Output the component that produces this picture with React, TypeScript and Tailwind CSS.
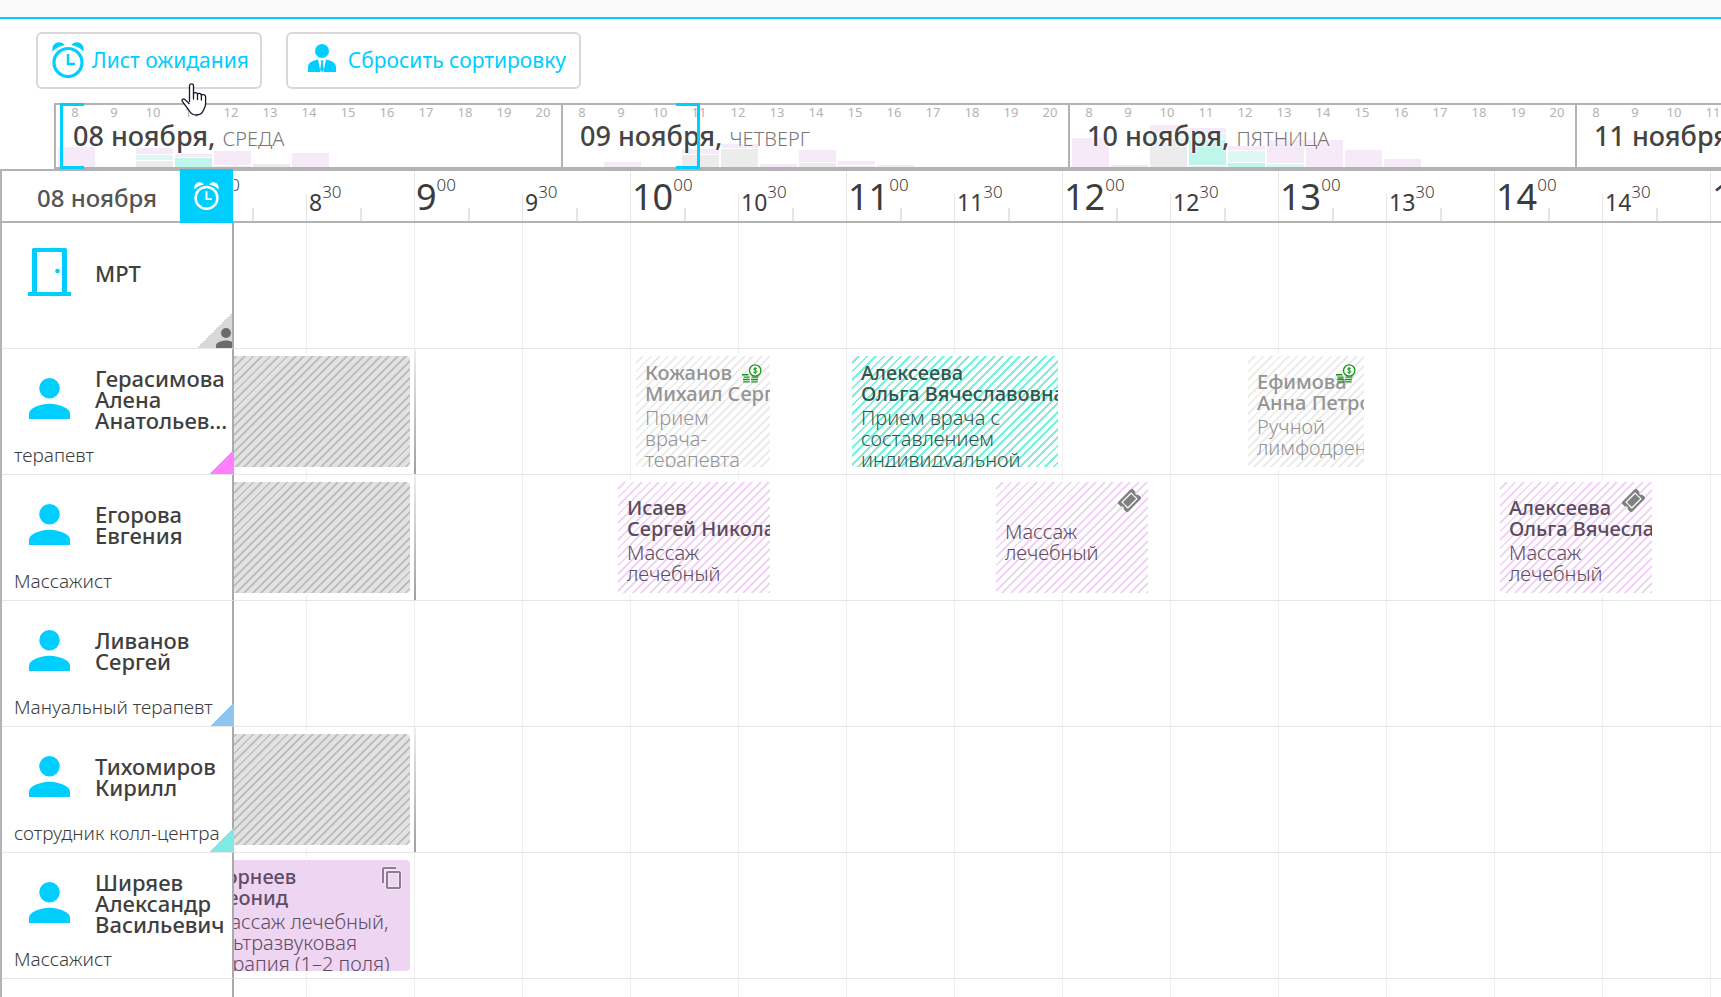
import React from 'react';
import { FaTicketAlt } from 'react-icons/fa';
import { MdContentCopy } from 'react-icons/md';

type Tone = 'pink' | 'grey' | 'mint' | 'teal';
type Segment = [Tone, number];

const toneClass: Record<Tone, string> = {
  pink: 'bg-[#f6eaf8]',
  grey: 'bg-[#ececec]',
  mint: 'bg-[#dcf7f4]',
  teal: 'bg-[#c0f5eb]',
};

interface Day {
  date: string;
  weekday: string;
  load: Record<number, Segment[]>;
}

const days: Day[] = [
  {
    date: '08 ноября,',
    weekday: 'СРЕДА',
    load: {
      8: [['pink', 20]],
      10: [['grey', 6], ['mint', 5], ['pink', 6]],
      11: [['teal', 9], ['pink', 3]],
      12: [['grey', 1], ['pink', 14]],
      13: [['grey', 3]],
      14: [['pink', 14]],
    },
  },
  {
    date: '09 ноября,',
    weekday: 'ЧЕТВЕРГ',
    load: {
      9: [['pink', 5]],
      11: [['grey', 12], ['pink', 5]],
      12: [['grey', 18], ['pink', 4]],
      13: [['pink', 3]],
      14: [['grey', 4], ['pink', 12]],
      15: [['grey', 1], ['pink', 4]],
      16: [['pink', 2]],
    },
  },
  {
    date: '10 ноября,',
    weekday: 'ПЯТНИЦА',
    load: {
      8: [['pink', 29]],
      9: [['grey', 2]],
      10: [['grey', 29], ['mint', 2], ['pink', 9]],
      11: [['grey', 1], ['teal', 25], ['mint', 5], ['pink', 5]],
      12: [['teal', 4], ['mint', 11], ['pink', 4]],
      13: [['mint', 3], ['pink', 23]],
      14: [['pink', 27]],
      15: [['pink', 17]],
      16: [['pink', 8]],
    },
  },
  { date: '11 ноября,', weekday: 'СУББОТА', load: {} },
];

const dayHours = [8, 9, 10, 11, 12, 13, 14, 15, 16, 17, 18, 19, 20];
const rulerHours = [8, 9, 10, 11, 12, 13, 14, 15];

type Look = 'busy' | 'done' | 'teal' | 'pink' | 'solid';

interface Visit {
  from: number;
  to: number;
  look: Look;
  client?: [string, string];
  service?: string;
  badge?: 'coins' | 'ticket' | 'copy';
}

interface Resource {
  name: string;
  role: string;
  kind: 'room' | 'person';
  corner?: string;
  shift?: boolean;
  visits: Visit[];
}

const at = (h: number, m = 0) => (h - 8) * 60 + m;

const resources: Resource[] = [
  { name: 'МРТ', role: '', kind: 'room', visits: [] },
  {
    name: 'Герасимова Алена Анатольев...',
    role: 'терапевт',
    kind: 'person',
    corner: 'bg-[linear-gradient(135deg,transparent_50%,#ff80ff_50%)]',
    shift: true,
    visits: [
      { from: at(8), to: at(9), look: 'busy' },
      { from: at(10), to: at(10, 40), look: 'done', client: ['Кожанов', 'Михаил Сергеевич'], service: 'Прием врача-терапевта', badge: 'coins' },
      { from: at(11), to: at(12), look: 'teal', client: ['Алексеева', 'Ольга Вячеславовна'], service: 'Прием врача с составлением индивидуальной' },
      { from: at(12, 50), to: at(13, 25), look: 'done', client: ['Ефимова', 'Анна Петровна'], service: 'Ручной лимфодренаж', badge: 'coins' },
    ],
  },
  {
    name: 'Егорова Евгения',
    role: 'Массажист',
    kind: 'person',
    shift: true,
    visits: [
      { from: at(8), to: at(9), look: 'busy' },
      { from: at(9, 55), to: at(10, 40), look: 'pink', client: ['Исаев', 'Сергей Николаевич'], service: 'Массаж лечебный' },
      { from: at(11, 40), to: at(12, 25), look: 'pink', service: 'Массаж лечебный', badge: 'ticket' },
      { from: at(14), to: at(14, 45), look: 'pink', client: ['Алексеева', 'Ольга Вячеславовна'], service: 'Массаж лечебный', badge: 'ticket' },
    ],
  },
  {
    name: 'Ливанов Сергей',
    role: 'Мануальный терапевт',
    kind: 'person',
    corner: 'bg-[linear-gradient(135deg,transparent_50%,#8ec5ef_50%)]',
    visits: [],
  },
  {
    name: 'Тихомиров Кирилл',
    role: 'сотрудник колл-центра',
    kind: 'person',
    corner: 'bg-[linear-gradient(135deg,transparent_50%,#80e9e6_50%)]',
    shift: true,
    visits: [{ from: at(8), to: at(9), look: 'busy' }],
  },
  {
    name: 'Ширяев Александр Васильевич',
    role: 'Массажист',
    kind: 'person',
    visits: [
      { from: at(8), to: at(9), look: 'solid', client: ['Корнеев', 'Леонид'], service: 'Массаж лечебный, ультразвуковая терапия (1–2 поля)', badge: 'copy' },
    ],
  },
];

const lookClass: Record<Look, string> = {
  busy: 'rounded bg-[repeating-linear-gradient(135deg,#e2e2e2_0_4px,#c0c0c0_4px_6px)]',
  done: 'text-[#949494] bg-[repeating-linear-gradient(135deg,#ffffff_0_4px,#ececec_4px_6px)]',
  teal: 'text-[#36544d] bg-[repeating-linear-gradient(135deg,#ffffff_0_4px,#7df0dc_4px_6px)]',
  pink: 'text-[#5c4a5e] bg-[repeating-linear-gradient(135deg,#ffffff_0_4px,#f0d6f4_4px_6px)]',
  solid: 'rounded text-[#604c65] bg-[#eed5f1]',
};

function AlarmIcon({ className }: { className: string }) {
  return (
    <svg viewBox="0 0 32 36" className={className} fill="none" aria-hidden="true">
      <circle cx="16" cy="20.5" r="14" stroke="currentColor" strokeWidth="3.2" />
      <path d="M16 12v10h7" stroke="currentColor" strokeWidth="2.4" />
      <path d="M.6 9.5C-.8 4 3-.2 7.5.2c2.300.1 4.300 1.400 5.200 3C7.500 4 3.500 6.200.6 9.500Z" fill="currentColor" />
      <path d="M31.400 9.500C32.800 4 29-.2 24.500.2c-2.300.1-4.300 1.400-5.200 3 5.200.8 9.200 3 12.100 6.300Z" fill="currentColor" />
    </svg>
  );
}

function DoctorIcon({ className }: { className: string }) {
  return (
    <svg viewBox="0 0 28 28" className={className} fill="currentColor" aria-hidden="true">
      <circle cx="14" cy="7" r="7" />
      <path d="M0 28v-4.500C0 19 3.500 17.200 10 15.600L12.600 28H0ZM28 28v-4.500c0-4.500-3.500-6.300-10-7.900L15.400 28H28Z" />
      <path d="M12.400 16.500h3.200l-.8 2.300 1.100 7L14 28.200l-1.900-2.400 1.100-7-.8-2.300Z" />
    </svg>
  );
}

function PersonIcon({ className }: { className: string }) {
  return (
    <svg viewBox="4 4 16 16" className={className} fill="currentColor" aria-hidden="true">
      <circle cx="12" cy="8" r="4" />
      <path d="M12 14c-2.670 0-8 1.340-8 4v2h16v-2c0-2.660-5.330-4-8-4z" />
    </svg>
  );
}

function DoorIcon({ className }: { className: string }) {
  return (
    <svg viewBox="0 0 43 48" className={className} fill="currentColor" aria-hidden="true">
      <path fillRule="evenodd" d="M5.500 0h32a1.500 1.500 0 0 1 1.500 1.500V44h4v4H0v-4h4V1.500A1.500 1.500 0 0 1 5.500 0ZM9 4v40h25V4H9Z" />
      <circle cx="29.500" cy="23" r="2.300" />
    </svg>
  );
}

function CoinsIcon({ className }: { className: string }) {
  return (
    <svg viewBox="0 0 20 19" className={className} fill="none" stroke="#149614" aria-hidden="true">
      <circle cx="13.200" cy="6.500" r="5.700" strokeWidth="1.300" fill="#fff" />
      <path d="M15 4.900c-.5-.8-3.500-1.100-3.500.3s3.500.9 3.500 2.400-3.200 1.300-3.800.3M13.200 3v7" strokeWidth="1" />
      <path d="M0 10.800h6.500M1.500 13.100h6M9.500 13.100h7M1 15.500h6.700M9 15.500h7M1.300 17.900h6.500M9.200 17.900h6.500" strokeWidth="1.400" />
    </svg>
  );
}

function HandPointer() {
  return (
    <svg viewBox="0 0 26 33" className="pointer-events-none absolute left-[181px] top-[83px] z-30 h-[33px] w-[26px]" aria-hidden="true">
      <path
        d="M8.500 19V2.800C8.500.3 12.500.3 12.500 2.800v7.700c.8-1.500 3.900-1.200 4 .6.900-1.200 3.700-.9 3.900 1 1-.9 4-.7 4.200 1.700v7.300c0 3-1.500 4.500-2.600 7-1.200 2.700-3.500 3.900-6.500 3.900-3.700 0-5.700-1.500-7.300-4.300L1.300 18.300c-.9-2 1-3 2.500-1.900L8.500 21"
        fill="#fff"
        stroke="#15152b"
        strokeWidth="1.300"
        strokeLinejoin="round"
      />
      <path d="M12.500 10v6M16.500 11v5.500M20.400 12v5" stroke="#15152b" strokeWidth="1.300" strokeLinecap="round" />
    </svg>
  );
}

function Toolbar() {
  const button =
    'flex h-[57px] items-center rounded-md border-2 border-[#d8d8d8] bg-white pb-[2px] text-[21px] leading-7 whitespace-nowrap text-[#00ceff]';
  return (
    <div className="flex gap-6 px-9 pt-[13px] pb-[14px]">
      <button type="button" className={`${button} gap-2 pr-[11px] pl-[14px]`}>
        <AlarmIcon className="h-9 w-8" />
        Лист ожидания
      </button>
      <button type="button" className={`${button} gap-3 pr-[13px] pl-5`}>
        <DoctorIcon className="mb-1 size-7" />
        Сбросить сортировку
      </button>
    </div>
  );
}

function DayStrip({ day }: { day: Day }) {
  return (
    <section className="relative w-[507px] shrink-0 border-l-2 border-[#b3b3b3] pl-[2px]">
      <div className="flex h-full items-end">
        {dayHours.map((hour) => (
          <div key={hour} className="flex h-full w-[39px] shrink-0 flex-col pr-[2px]">
            <span className="-ml-[3px] text-center text-[13px] leading-[15px] text-[#b3b3b3]">{hour}</span>
            <div className="flex flex-1 flex-col-reverse gap-px">
              {(day.load[hour] ?? []).map(([tone, height], i) => (
                <div key={i} className={toneClass[tone]} style={{ height }} />
              ))}
            </div>
          </div>
        ))}
      </div>
      <h2 className="absolute top-[15px] left-[17px] text-[27px] leading-8 font-medium whitespace-nowrap text-[#444] [text-shadow:0_0_2px_#fff,0_0_2px_#fff,0_0_3px_#fff]">
        {day.date} <span className="text-xl font-light text-[#777]">{day.weekday}</span>
      </h2>
    </section>
  );
}

function Overview() {
  return (
    <div className="relative ml-[54px] h-[66px] border-y-2 border-[#b3b3b3]">
      <div className="flex h-full overflow-hidden">
        {days.map((day) => (
          <DayStrip key={day.date} day={day} />
        ))}
      </div>
      <div className="absolute -top-[2px] left-[6px] h-[66px] w-6 border-y-3 border-l-3 border-[#00ceff]" />
      <div className="absolute -top-[2px] left-[622px] h-[66px] w-6 border-y-3 border-r-3 border-[#00ceff]" />
    </div>
  );
}

function Ruler() {
  return (
    <div className="min-w-0 flex-1 overflow-hidden">
      <div className="-ml-9 flex h-[50px] text-[#3c3c3c]">
        {rulerHours.map((hour) => (
          <div key={hour} className="flex w-[216px] shrink-0 items-end">
            <div className="flex h-[50px] w-[54px] items-start border-l border-[#e6e6e6] pl-px whitespace-nowrap">
              <span className="text-4xl leading-[52px]">{hour}</span>
              <span className="text-[17px] leading-7 font-light">00</span>
            </div>
            <div className="h-[13px] w-[54px] border-l-2 border-[#e6e6e6]" />
            <div className="flex h-[27px] w-[54px] items-start border-l border-[#e6e6e6] pl-[2px] whitespace-nowrap">
              <span className="text-[23px] leading-4">{hour}</span>
              <span className="-mt-2 text-[17px] leading-3 font-light">30</span>
            </div>
            <div className="h-[13px] w-[54px] border-l-2 border-[#e6e6e6]" />
          </div>
        ))}
      </div>
    </div>
  );
}

function VisitCard({ visit }: { visit: Visit }) {
  return (
    <article
      className={`absolute top-[7px] h-[111px] overflow-hidden shadow-[0_0_0_2px_#fff] ${lookClass[visit.look]}`}
      style={{ left: visit.from * 3.6 + 6, width: (visit.to - visit.from) * 3.6 - 10 }}
    >
      <div className="flex h-full flex-col justify-center-safe pt-[6px] pl-[9px] text-xl leading-[21px]">
        {visit.client && (
          <h3 className="font-medium whitespace-nowrap">
            {visit.client[0]}
            <br />
            {visit.client[1]}
          </h3>
        )}
        {visit.service && <p className="mt-[3px] font-light">{visit.service}</p>}
      </div>
      {visit.badge === 'coins' && <CoinsIcon className="absolute top-2 right-2 h-[19px] w-5" />}
      {visit.badge === 'ticket' && <FaTicketAlt className="absolute top-2 right-2 size-[21px] -rotate-45 text-[#808080]" />}
      {visit.badge === 'copy' && <MdContentCopy className="absolute top-[6px] right-[6px] size-6 text-[#8b7d8e] drop-shadow-[0_0_1px_#fff]" />}
    </article>
  );
}

function ResourceRow({ resource }: { resource: Resource }) {
  return (
    <div className="flex h-[126px] shrink-0">
      <div className="relative flex w-[232px] shrink-0 flex-col border-r-2 border-b border-r-[#aaaaaa] border-b-[#e6e6e6]">
        <div className="flex h-[98px] items-center pt-[2px]">
          <div className="mb-[2px] flex w-[93px] shrink-0 justify-center pl-[2px] text-[#00ceff]">
            {resource.kind === 'room' ? <DoorIcon className="h-12 w-[43px]" /> : <PersonIcon className="size-[41px]" />}
          </div>
          <h3 className="w-[136px] text-[22px] leading-[21px] font-medium text-[#3f3f3f]">{resource.name}</h3>
        </div>
        <p className="pl-3 text-[19px] leading-4 font-light whitespace-nowrap text-[#3c3c3c]">{resource.role}</p>
        {resource.corner && <div className={`absolute -right-[2px] bottom-0 size-6 ${resource.corner}`} />}
        {resource.kind === 'room' && (
          <div className="absolute right-0 bottom-0 flex size-[35px] items-end justify-end overflow-hidden bg-[linear-gradient(135deg,transparent_50%,#d8d8d8_50%)]">
            <PersonIcon className="-mr-1 size-5 shrink-0 text-[#6b6b6b]" />
          </div>
        )}
      </div>
      <div className="min-w-0 flex-1 overflow-hidden border-b border-[#e6e6e6]">
        <div className="relative -ml-9 h-full bg-[linear-gradient(to_right,#efefef_1px,transparent_1px)] bg-[length:108px_100%]">
          {resource.shift && <div className="absolute top-0 left-[216px] h-full w-[2px] bg-linear-to-b from-[#eeeeee] to-[#a0a0a0]" />}
          {resource.visits.map((visit) => (
            <VisitCard key={visit.from} visit={visit} />
          ))}
        </div>
      </div>
    </div>
  );
}

export default function App() {
  return (
    <main className="relative flex h-screen flex-col overflow-hidden bg-white font-['Noto_Sans','Open_Sans',sans-serif]">
      <header className="h-[19px] shrink-0 border-b-2 border-[#00ceff] bg-[#fafafa]" />
      <div className="shrink-0">
        <Toolbar />
        <Overview />
      </div>
      <div className="flex min-h-0 flex-1 flex-col border-t-2 border-l-2 border-[#b3b3b3]">
        <div className="flex h-[52px] shrink-0 border-b-2 border-[#b3b3b3]">
          <div className="flex w-[232px] shrink-0">
            <div className="flex flex-1 items-center justify-center pt-1 pl-6 pr-3 text-2xl font-medium whitespace-nowrap text-[#555]">08 ноября</div>
            <button type="button" aria-label="Лист ожидания" className="z-10 -mt-[2px] -mb-[2px] mr-px flex w-[53px] items-center justify-center bg-[#00ceff] text-white">
              <AlarmIcon className="h-7 w-[25px]" />
            </button>
          </div>
          <Ruler />
        </div>
        {resources.map((resource) => (
          <ResourceRow key={resource.name} resource={resource} />
        ))}
        <div className="flex min-h-0 flex-1">
          <div className="w-[232px] shrink-0 border-r-2 border-[#aaaaaa]" />
          <div className="min-w-0 flex-1 overflow-hidden">
            <div className="-ml-9 h-full bg-[linear-gradient(to_right,#efefef_1px,transparent_1px)] bg-[length:108px_100%]" />
          </div>
        </div>
      </div>
      <HandPointer />
    </main>
  );
}
